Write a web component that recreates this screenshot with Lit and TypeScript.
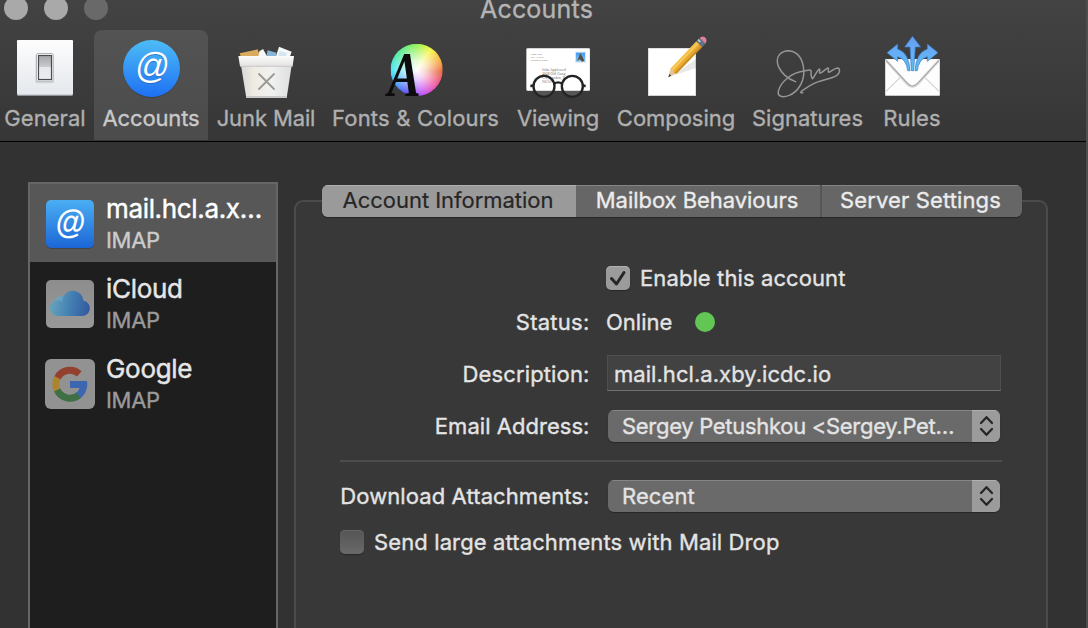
import { LitElement, html, svg, css, nothing } from "lit";
import { classMap } from "lit/directives/class-map.js";

const generalIcon = svg`
  <defs>
    <linearGradient id="plate" x1="0" y1="0" x2="0" y2="1"><stop offset="0" stop-color="#fdfdfe"/><stop offset="1" stop-color="#e4e8ec"/></linearGradient>
    <linearGradient id="rocker" x1="0" y1="0" x2="0" y2="1"><stop offset="0" stop-color="#a4a5a9"/><stop offset=".46" stop-color="#c9cacd"/><stop offset=".5" stop-color="#e6e9ec"/><stop offset="1" stop-color="#e9edf1"/></linearGradient>
  </defs>
  <rect x="51" y="120" width="168" height="168" rx="4" fill="#8b9299"/>
  <rect x="51" y="120" width="168" height="164" rx="4" fill="url(#plate)"/>
  <rect x="106" y="162" width="56" height="88" rx="5" fill="#000" opacity=".1"/>
  <rect x="109.500" y="160.500" width="50" height="83" rx="4" fill="#f8f8f9" stroke="#b4b4b8" stroke-width="3"/>
  <rect x="115.500" y="166.500" width="39" height="72" fill="url(#rocker)" stroke="#4a4c50" stroke-width="3.500"/>`;

const accountsIcon = svg`
  <defs><linearGradient id="disc" x1="0" y1="0" x2="0" y2="1"><stop offset="0" stop-color="#4dbcf6"/><stop offset="1" stop-color="#1e70f3"/></linearGradient></defs>
  <circle cx="454.500" cy="208" r="86" fill="#000" opacity=".18"/>
  <circle cx="454.500" cy="205.500" r="85.500" fill="url(#disc)"/>
  <text transform="translate(455 237) skewX(-5) scale(.93 1)" class="at shade" fill="#1c4f9c">@</text>
  <text transform="translate(455 233) skewX(-5) scale(.93 1)" class="at" fill="#fff">@</text>`;

const junkIcon = svg`
  <defs>
    <linearGradient id="bin" x1="0" y1="0" x2="1" y2="0"><stop offset="0" stop-color="#d9d9d9"/><stop offset=".25" stop-color="#efebe2"/><stop offset=".6" stop-color="#f0f1f1"/><stop offset="1" stop-color="#dedede"/></linearGradient>
    <linearGradient id="rim" x1="0" y1="0" x2="0" y2="1"><stop offset="0" stop-color="#fbfbfb"/><stop offset="1" stop-color="#e3e2e0"/></linearGradient>
  </defs>
  <path d="M104 160 L158 148 L166 172 H108 Z" fill="#d9ab5c"/>
  <path d="M163 154 L174 147 L188 172 H160 Z" fill="#f6f7f8"/>
  <path d="M188 151 L214 158 L214 172 H184 Z" fill="#86b5db"/>
  <path d="M222 140 L260 155 L254 172 H212 Z" fill="#f5f8fa"/>
  <path d="M224 152 L246 160 L242 170 H220 Z" fill="#d3e6f1"/>
  <path d="M108 196 H260 L245 294 H124 Z" fill="url(#bin)"/>
  <path d="M123 288 H246 L245 294 H124 Z" fill="#c9c9c9"/>
  <path d="M100 168 H267 L263 199 H105 Z" fill="url(#rim)"/>
  <path d="M105 199 H263" stroke="#c4c3c0" stroke-width="2.500"/>
  <path d="M162 222 L207 267 M207 222 L162 267" stroke="#9b9a92" stroke-width="5.500" stroke-linecap="round"/>`;

const fontsIcon = svg`
  <foreignObject x="555" y="131" width="157" height="157"><div class="wheel"></div></foreignObject>
  <text class="letter" transform="translate(547 289) scale(.79 1)" x="0" y="0">A</text>`;

const viewingIcon = svg`
  <defs><linearGradient id="stamp" x1="0" y1="0" x2="0" y2="1"><stop offset="0" stop-color="#3f9af0"/><stop offset="1" stop-color="#8cc4ef"/></linearGradient></defs>
  <rect x="79" y="144" width="191" height="129" rx="4" fill="#c5c5c5"/>
  <rect x="80" y="146" width="189" height="125" rx="3" fill="#fff"/>
  <g class="script small"><text x="92" y="166">Jenny Kolt</text><text x="92" y="175">123 Allview</text><text x="92" y="184">Dearth 27 Road</text></g>
  <g class="script"><text x="126" y="213">John Appleseed</text><text x="126" y="225">4048 Old Gung</text><text x="126" y="237">CA, London, E</text><text x="126" y="248">90210</text></g>
  <rect x="225" y="155" width="33" height="33" fill="#dfe4ea"/>
  <rect x="228" y="158" width="27" height="27" fill="url(#stamp)"/>
  <path d="M240 160 L246 168 L253 182 L246 185 L240 177 L231 183 L237 171 Z" fill="#5a4c3c"/>
  <g fill="#fff" fill-opacity=".14" stroke="#222426" stroke-width="7">
    <circle cx="132" cy="259" r="31.500"/><circle cx="217" cy="259" r="31.500"/>
  </g>
  <path d="M162 251 Q174 243 187 251" fill="none" stroke="#222426" stroke-width="7"/>
  <path d="M91 258 L101 257 M248 257 L257 258" stroke="#222426" stroke-width="8"/>`;

const composingIcon = svg`
  <defs><linearGradient id="wood" gradientUnits="userSpaceOnUse" x1="548" y1="162" x2="568" y2="180"><stop offset="0" stop-color="#f8cc58"/><stop offset=".5" stop-color="#f2b534"/><stop offset="1" stop-color="#d6952a"/></linearGradient></defs>
  <rect x="444" y="144" width="144" height="144" fill="#d0d0d0"/>
  <rect x="446" y="146" width="140" height="139" fill="#fff"/>
  <path d="M510 231 L588 178 V204 L532 223 Z" fill="#000" opacity=".09"/>
  <path d="M505 232 L512 204 L530 219 Z" fill="#e3c39a"/>
  <path d="M505 232 L508 222 L514 227 Z" fill="#3a3a3a"/>
  <path d="M511 206 L589 124 L607 141 L530 221 L522 220 L520 212 Z" fill="url(#wood)"/>
  <path d="M517 210 L595 129" stroke="#fbdc80" stroke-width="3"/>
  <path d="M526 219 L606 139" stroke="#a96c19" stroke-width="2"/>
  <path d="M589 124 L599 114 L616 131 L607 141 Z" fill="#5d7388"/>
  <path d="M594 119 L601 126" stroke="#c5d1db" stroke-width="5"/>
  <path d="M599 114 Q606 106 615 112 Q624 120 616 131 Z" fill="#dd7f9f"/>`;

const signaturesIcon = svg`
  <g fill="none" stroke="#959595" stroke-width="4.500" stroke-linecap="round" stroke-linejoin="round">
    <path d="M165 245 C146 238 124 222 114 200 C102 170 122 152 144 152 C172 153 188 178 190 212 C191 246 172 276 146 286 C126 294 109 290 114 272 C121 246 152 218 190 213 C202 211 210 207 212 213 C211 224 212 232 216 236 C222 230 228 214 236 207 C241 206 234 219 238 220 C246 219 254 206 262 204 C267 204 260 216 264 217 C272 216 281 204 291 204 C300 205 299 220 288 227 C270 238 242 239 215 253 C200 261 191 268 182 274 C179 278 182 280 187 278"/>
  </g>`;

const rulesIcon = svg`
  <defs><linearGradient id="arrow" gradientUnits="userSpaceOnUse" x1="0" y1="108" x2="0" y2="214"><stop offset="0" stop-color="#659bf0"/><stop offset=".5" stop-color="#66aef5"/><stop offset="1" stop-color="#56c0f0"/></linearGradient></defs>
  <rect x="435" y="177" width="165" height="111" rx="3" fill="#c8c8c8"/>
  <rect x="437" y="178" width="161" height="107" rx="2" fill="#fdfdfd"/>
  <path d="M438 274 L482 231 M597 274 L553 231" stroke="#bdbdbd" stroke-width="3" fill="none"/>
  <path d="M438 181 L502 252 Q517 268 533 252 L597 181" stroke="#dcdcdc" stroke-width="8" fill="none"/>
  <path d="M438 181 L502 250 Q517 266 533 250 L597 181" stroke="#a8a8a8" stroke-width="3.500" fill="none"/>
  <g fill="url(#arrow)" stroke="#3579c8" stroke-width="2" stroke-linejoin="round">
    <path d="M441 158 L473 132 V147 Q507 158 510 212 H503 Q499 177 473 170 V184 Z"/>
    <path d="M594 158 L562 132 V147 Q528 158 525 212 H532 Q536 177 562 170 V184 Z"/>
    <path d="M517.500 109 L542 141 H526 L521 212 H514 L510 141 H494 Z"/>
  </g>`;

const TOOLS = [
  { id: "general", label: "General", x: 15, icon: generalIcon },
  { id: "accounts", label: "Accounts", x: 333, icon: accountsIcon },
  { id: "junk", label: "Junk Mail", x: 63, icon: junkIcon },
  { id: "fonts", label: "Fonts & Colours", x: 511.5, icon: fontsIcon },
  { id: "viewing", label: "Viewing", x: 54, icon: viewingIcon },
  { id: "composing", label: "Composing", x: 408, icon: composingIcon },
  { id: "signatures", label: "Signatures", x: 82.5, icon: signaturesIcon },
  { id: "rules", label: "Rules", x: 396, icon: rulesIcon },
];

const mailBadge = svg`
  <defs><linearGradient id="mb" x1="0" y1="0" x2="0" y2="1"><stop offset="0" stop-color="#4aaef3"/><stop offset="1" stop-color="#1c66d6"/></linearGradient></defs>
  <rect x="1" y="2" width="48" height="48" rx="5" fill="#000" opacity=".2"/>
  <rect x="1" y="1" width="48" height="48" rx="5" fill="url(#mb)"/>
  <text class="badge-at" transform="translate(25 34.200) skewX(-4) scale(.9 1)">@</text>`;

const cloudBadge = svg`
  <defs>
    <linearGradient id="plate2" x1="0" y1="0" x2="0" y2="1"><stop offset="0" stop-color="#8d8d8d"/><stop offset="1" stop-color="#999"/></linearGradient>
    <linearGradient id="cl" x1="0" y1=".6" x2="1" y2=".7"><stop offset="0" stop-color="#68a3bc"/><stop offset=".45" stop-color="#4584b4"/><stop offset="1" stop-color="#33589f"/></linearGradient>
  </defs>
  <rect x="1" y="1" width="48" height="48" rx="5" fill="url(#plate2)"/>
  <path d="M13 37 A8 8 0 0 1 10 21.500 A6.500 6.500 0 0 1 18.500 17.500 A10.500 10.500 0 0 1 38.300 21.500 A7.800 7.800 0 0 1 37 37 Z" fill="url(#cl)"/>
  <path d="M10 21.500 A6.500 6.500 0 0 1 18.500 17.500 Q17 20 17.500 23.500 Q14 20.500 10 21.500 Z" fill="#7fb3c8" opacity=".45"/>`;

const googleBadge = svg`
  <rect width="50" height="50" rx="6" fill="#929292"/>
  <g fill="none" stroke-width="7">
    <path d="M34.300 14.800 A14.200 14.200 0 0 0 12.200 19.200" stroke="#94402f"/>
    <path d="M12.400 18.600 A14.200 14.200 0 0 0 12.400 31.400" stroke="#ab8430"/>
    <path d="M12.200 31 A14.200 14.200 0 0 0 34 36" stroke="#3f7045"/>
    <path d="M33.600 36.300 A14.200 14.200 0 0 0 38.600 25.400" stroke="#3d66b0"/>
  </g>
  <path d="M25 22 H42 Q42.500 25 42 29 H25 Z" fill="#3d66b0"/>`;

const ACCOUNTS = [
  { id: "n-mail", name: "mail.hcl.a.x…", kind: "IMAP", badge: mailBadge, on: true },
  { id: "n-cloud", name: "iCloud", kind: "IMAP", badge: cloudBadge, on: false },
  { id: "n-google", name: "Google", kind: "IMAP", badge: googleBadge, on: false },
];

class PrefPopup extends LitElement {
  static properties = { value: {} };
  declare value: string;
  static styles = css`
    :host { display: flex; width: 392px; height: 32px; border-radius: 6px; overflow: hidden; background: #6a6a6a; box-shadow: 0 1px 1px rgba(0,0,0,.3); }
    .value { flex: 1; padding-left: 14px; line-height: 32px; box-shadow: inset 0 1px #868686; white-space: nowrap; }
    .step { width: 28px; background: #9b9b9b; box-shadow: inset 0 1px #b0b0b0; }
    svg { display: block; }
  `;
  render() {
    return html`<span class="value">${this.value}</span>
      <span class="step"><svg width="28" height="32" fill="none" stroke="#262626" stroke-width="2.300" stroke-linecap="round" stroke-linejoin="round"><path d="M9 13 L14.500 7.200 L20 13 M9 19 L14.500 24.800 L20 19"/></svg></span>`;
  }
}
customElements.define("pref-popup", PrefPopup);

class AppRoot extends LitElement {
  static styles = css`
    :host { display: flex; flex-direction: column; box-sizing: border-box; width: 1088px; height: 628px; overflow: hidden; border-right: 2px solid #4e4e4e; background: #323232; color: #e4e4e4; font: 400 22px/28px Inter, "Liberation Sans", sans-serif; -webkit-text-stroke: .35px; }
    svg { display: block; overflow: visible; }
    header { height: 141px; flex: none; background: linear-gradient(#434343, #363636); border-bottom: 1px solid #000; }
    .titlebar { display: grid; grid-template-columns: 200px 1fr 213px; height: 30px; }
    .lights { display: flex; gap: 16px; margin: -4px 0 0 4px; }
    .light { width: 24px; height: 24px; border-radius: 50%; background: #a9a9a9; }
    .light.dim { background: #696969; }
    .title { text-align: center; font-size: 25px; line-height: 18px; letter-spacing: .2px; color: #b4b4b4; }
    .tools { display: flex; }
    .tool { display: flex; flex-direction: column; align-items: center; height: 110px; color: #b0b0b0; white-space: nowrap; }
    .tool svg { width: 80px; height: 70px; margin-top: 2px; }
    .tool .label { margin-top: 2px; line-height: 28px; }
    .tool.on { background: linear-gradient(#535353, #4b4b4b); border-radius: 8px 8px 0 0; color: #c9c9c9; }
    .general { width: 90px; margin-right: 4px; letter-spacing: .05px; }
    .accounts { width: 114px; letter-spacing: -.12px; }
    .junk { width: 116px; letter-spacing: -.12px; }
    .fonts { width: 183px; letter-spacing: .2px; }
    .viewing { width: 102px; letter-spacing: -.1px; }
    .composing { width: 134px; letter-spacing: -.04px; }
    .signatures { width: 129px; letter-spacing: .04px; }
    .rules { width: 80px; letter-spacing: .1px; }
    .at { font: 109px "Liberation Sans", sans-serif; text-anchor: middle; letter-spacing: 0; -webkit-text-stroke: 0; }
    .shade { opacity: .5; }
    .wheel { width: 157px; height: 157px; border-radius: 50%; background: radial-gradient(circle, #fff 0, rgba(255,255,255,.75) 25%, rgba(255,255,255,0) 72%), conic-gradient(#8cf04a, #f4f63e 35deg, #f7a83e 70deg, #e8623c 95deg, #ee4f9e 130deg, #c44cf8 165deg, #5a4cf4 205deg, #3f9cf6 235deg, #42e6f4 270deg, #4bea9c 310deg, #8cf04a); }
    .letter { font: italic 700 188px "Liberation Serif", serif; fill: #0c0c0c; -webkit-text-stroke: 0; letter-spacing: 0; }
    .script { font: 10.500px "Liberation Serif", serif; fill: #666; -webkit-text-stroke: 0; letter-spacing: .4px; }
    .script.small { font-size: 8px; letter-spacing: 0; }

    main { flex: 1; display: flex; }
    aside { box-sizing: border-box; width: 250px; height: 500px; margin: 40px 16px 0 28px; border: 2px solid #666; background: #1e1e1e; }
    .account { display: flex; height: 80px; box-sizing: border-box; padding: 17px 0 0 15px; gap: 11px; }
    .account.on { height: 78px; padding-top: 15px; background: #575757; }
    .account svg { width: 50px; height: 50px; flex: none; }
    .badge-at { font: 700 33.500px "Liberation Sans", sans-serif; text-anchor: middle; fill: #fff; -webkit-text-stroke: 0; letter-spacing: 0; }
    .who { display: flex; flex-direction: column; margin-top: -7px; white-space: nowrap; }
    .name { font-size: 26px; line-height: 34px; color: #e6e6e6; -webkit-text-stroke: .45px; letter-spacing: -.3px; }
    .name.n-mail { letter-spacing: -.34px; }
    .on .name { color: #fff; }
    .kind { line-height: 28px; margin-top: 0; color: #9a9a9a; letter-spacing: -.3px; }
    .on .kind { color: #cbcbcb; }

    .pane { box-sizing: border-box; width: 754px; height: 460px; margin-top: 58px; border: 2px solid #4b4b4b; border-radius: 9px; background: #383838; }
    .segments { display: flex; width: 700px; height: 32px; margin: -17px 0 0 26px; border-radius: 6px; overflow: hidden; background: #666; box-shadow: 0 1px 1px rgba(0,0,0,.3); line-height: 30px; text-align: center; }
    .seg { box-sizing: border-box; padding-right: 2px; box-shadow: inset 0 1px #858585; color: #ececec; white-space: nowrap; }
    .seg.info { width: 254px; background: #9a9a9a; color: #262626; box-shadow: inset 0 1px #b0b0b0; -webkit-text-stroke: .2px; letter-spacing: -.03px; }
    .seg.mailbox { width: 246px; border-right: 2px solid #565656; letter-spacing: -.05px; }
    .seg.server { flex: 1; letter-spacing: .12px; padding-right: 3px; }
    .form { margin: 39px 44px 0; display: flex; flex-direction: column; }
    .row { display: grid; grid-template-columns: 250px 1fr; column-gap: 16px; align-items: center; height: 44px; letter-spacing: .1px; }
    .row > .key { text-align: right; white-space: nowrap; padding-right: .5px; }
    .row.desc { height: 58px; }
    .row.desc .key { margin-top: 2px; letter-spacing: .14px; }
    .row.mail .key { letter-spacing: .04px; }
    .row.pick { height: 48px; }
    .row pref-popup { margin-left: 2px; }
    .row.mail pref-popup { letter-spacing: -.3px; }
    .row .status-key { letter-spacing: .25px; }
    .check, .status { display: flex; align-items: center; gap: 10px; white-space: nowrap; }
    .status { gap: 23px; letter-spacing: 0; }
    .dot { width: 20px; height: 20px; margin-left: -.500px; border-radius: 50%; background: #62c655; }
    .box { width: 24px; height: 24px; border-radius: 5px; background: linear-gradient(#555, #696969); box-shadow: 0 1px 1px rgba(0,0,0,.3), inset 0 1px #666; }
    .box.ticked { background: #9b9b9b; box-shadow: 0 1px 1px rgba(0,0,0,.3), inset 0 1px #b0b0b0; }
    .field { box-sizing: border-box; width: 394px; height: 36px; padding-left: 6px; margin-left: 1px; border: 1px solid #4e4e4e; border-bottom-color: #707070; background: #424242; line-height: 36px; letter-spacing: .05px; }
    .rule { height: 2px; width: 662px; margin: 10px 0; background: #4c4c4c; }
    .drop { height: 44px; letter-spacing: .12px; }
  `;

  render() {
    return html`
      <header>
        <div class="titlebar">
          <div class="lights"><span class="light"></span><span class="light"></span><span class="light dim"></span></div>
          <div class="title">Accounts</div>
        </div>
        <nav class="tools">
          ${TOOLS.map((t) => html`
            <div class="tool ${t.id} ${t.id === "accounts" ? "on" : ""}">
              <svg viewBox="${t.x} 96 240 210">${t.icon}</svg>
              <span class="label">${t.label}</span>
            </div>`)}
        </nav>
      </header>
      <main>
        <aside>
          ${ACCOUNTS.map((a) => html`
            <div class=${classMap({ account: true, on: a.on })}>
              <svg viewBox="0 0 50 50">${a.badge}</svg>
              <div class="who"><span class="name ${a.id}">${a.name}</span><span class="kind">${a.kind}</span></div>
            </div>`)}
        </aside>
        <section class="pane">
          <div class="segments">
            <span class="seg info">Account Information</span>
            <span class="seg mailbox">Mailbox Behaviours</span>
            <span class="seg server">Server Settings</span>
          </div>
          <div class="form">
            <div class="row"><span></span><label class="check">${this.box(true)}Enable this account</label></div>
            <div class="row"><span class="key status-key">Status:</span><span class="status">Online<i class="dot"></i></span></div>
            <div class="row desc"><span class="key">Description:</span><div class="field">mail.hcl.a.xby.icdc.io</div></div>
            <div class="row pick mail"><span class="key">Email Address:</span><pref-popup .value=${"Sergey Petushkou <Sergey.Pet…"}></pref-popup></div>
            <div class="rule"></div>
            <div class="row pick"><span class="key">Download Attachments:</span><pref-popup .value=${"Recent"}></pref-popup></div>
            <label class="check drop">${this.box(false)}Send large attachments with Mail Drop</label>
          </div>
        </section>
      </main>`;
  }

  box(ticked: boolean) {
    return html`<span class=${classMap({ box: true, ticked })}>${ticked
      ? html`<svg width="24" height="24" fill="none" stroke="#262626" stroke-width="3" stroke-linecap="round" stroke-linejoin="round"><path d="M5.500 12.500 L10.500 18 L18 6.500"/></svg>`
      : nothing}</span>`;
  }
}
customElements.define("app-root", AppRoot);
